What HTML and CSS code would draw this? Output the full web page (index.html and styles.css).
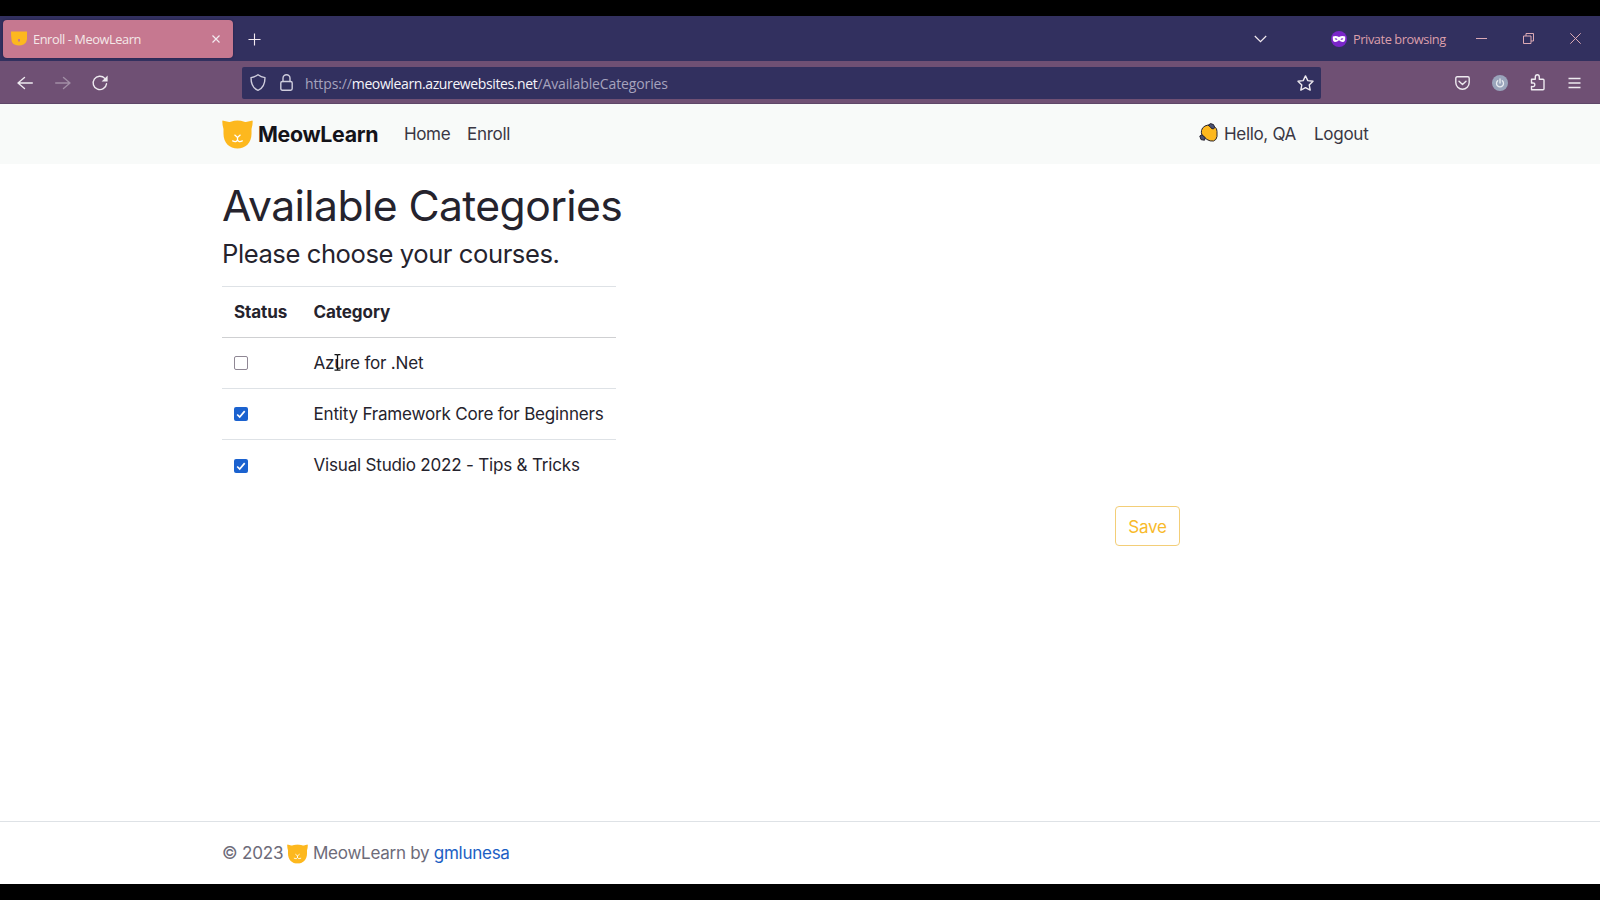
FILE: index.html
```html
<!DOCTYPE html>
<html lang="en">
<head>
<meta charset="utf-8">
<title>Enroll - MeowLearn</title>
<link rel="stylesheet" href="styles.css">
</head>
<body>
<svg class="defs" width="0" height="0">
  <symbol id="cat" viewBox="0 0 32 30">
    <path fill="#fdb81e" d="M.3 1.200C.3.6.8.5 1.300.7L5 1.500q2 .8 4 .2 7-2.200 14 0 2 .6 4-.2L30.700.7c.5-.2 1 0 1 .5q.1 4-1.200 8v5C30.500 24 24 29.500 16 29.500S1.500 24 1.500 14.200v-5Q.2 5 .3 1.200z"/>
    <path fill="none" stroke="#fff" stroke-width="1.300" stroke-linecap="round" stroke-linejoin="round" d="M13.200 15.600L16 18l2.800-2.400M16 18v2.600M11 21.600q3.800 2 5-1.200 1.200 3.200 5 1.200"/>
  </symbol>
</svg>
<div class="screen">
  <div class="tabs">
    <div class="tab">
      <svg class="favicon" viewBox="0 0 32 30"><path fill="#fdb81e" d="M0 1h32v15q-1 8-7 11-9 4-18 0-6-3-6-10Q0 9 0 1z"/><path fill="#c67890" d="M14 16h4v5h-4z"/></svg>
      <span class="tab-title">Enroll - MeowLearn</span>
      <svg class="tab-close" viewBox="0 0 8 8"><path d="M.5.500l7 7M7.500.500l-7 7"/></svg>
    </div>
    <svg class="plus" viewBox="0 0 14 14"><path d="M7 .5v13M.5 7h13"/></svg>
    <svg class="chev" viewBox="0 0 13 8"><path d="M.8 1l5.700 5.700L12.200 1"/></svg>
    <svg class="mask" viewBox="0 0 16 16"><circle cx="8" cy="8" r="8" fill="#7a26c9"/><path fill="#fff" fill-rule="evenodd" d="M1.800 5.500Q5 4.200 8 6q3-1.800 6.200-.5.500 5.500-2.500 5.500-2 0-3.700-1.800Q6.300 11 4.300 11 1.300 11 1.800 5.500zM3.600 7.700q1.500-1 2.900.6-1.500 1.300-2.900-.6zM12.400 7.700q-1.500-1-2.900.6 1.500 1.300 2.900-.6z"/></svg>
    <span class="private">Private browsing</span>
    <svg class="win min" viewBox="0 0 11 11"><path d="M0 5.500h11"/></svg>
    <svg class="win max" viewBox="0 0 11 11"><path d="M.5 3h7.500v7.500H.5zM3 3V.5h7.500V8H8"/></svg>
    <svg class="win cls" viewBox="0 0 11 11"><path d="M.3.300l10.400 10.400M10.700.300L.3 10.700"/></svg>
  </div>
  <div class="toolbar">
    <svg class="ic back" viewBox="0 0 16 16"><path d="M15.300 8H1M7.500 2.500L1 8l6.500 5.500"/></svg>
    <svg class="ic fwd" viewBox="0 0 16 16"><path d="M.7 8H15M8.500 2.500L15 8l-6.500 5.500"/></svg>
    <svg class="ic reload" viewBox="0 0 16 16"><path d="M14.500 8.800A6.700 6.700 0 1 1 12.800 3.400"/><path class="solid" d="M15.600.5v6H9.600z"/></svg>
    <div class="urlbar">
      <svg class="ic shield" viewBox="0 0 16 17"><path d="M8 .8Q11 3 15 3.600C15 10 13 14.500 8 16.300 3 14.500 1 10 1 3.600 5 3 8 .8 8 .8z"/></svg>
      <svg class="ic lock" viewBox="0 0 13 17"><rect x=".8" y="7.500" width="11.400" height="8.700" rx="1.600"/><path d="M3 7.500V4.200a3.500 3.500 0 0 1 7 0v3.300"/></svg>
      <span class="url">https://<b>meowlearn.azurewebsites.net</b>/AvailableCategories</span>
      <svg class="ic star" viewBox="0 0 17 16"><path d="M8.500.9l2.300 4.700 5.200.7-3.800 3.600 1 5.200-4.700-2.500-4.700 2.500 1-5.200L1 6.300l5.200-.7z"/></svg>
    </div>
    <svg class="ic pocket" viewBox="0 0 15 14"><path d="M2.200.8h10.600q1.400 0 1.400 1.400V6.500a6.700 6.700 0 0 1-13.400 0V2.200Q.8.8 2.200.8zM4 5.200L7.500 8.500 11 5.200"/></svg>
    <svg class="power" viewBox="0 0 16 16"><circle cx="8" cy="8" r="8" fill="#9aa4bb"/><path fill="none" stroke="#e8ebf0" stroke-width="1.300" stroke-linecap="round" d="M8 4v4M5.700 5.700a3.500 3.500 0 1 0 4.600 0"/></svg>
    <svg class="ic puzzle" viewBox="0 0 15 17"><path d="M1.500 15.800v-3.300q3.300.6 3.300-1.700T1.500 9.100V5.300h3.800V3q0-2.200 2-2.200t2 2.200v2.300h3.700q1 0 1 1v8.500q0 1-1 1z"/></svg>
    <svg class="ic menu" viewBox="0 0 13 12"><path d="M.5 1.500h12M.5 6h12M.5 10.500h12"/></svg>
  </div>
  <nav class="nav">
    <svg class="logo" viewBox="0 0 32 30"><use href="#cat"/></svg>
    <span class="brand">MeowLearn</span>
    <span class="home">Home</span>
    <span class="enroll">Enroll</span>
    <svg class="wave" viewBox="0 0 19 19"><path d="M2.500 7.500Q3 4.500 6 3q3-1.600 5.500-.5L16 4.200q2 1.300 2 4.300v5q-.5 3.500-3.500 4.500-3.500.5-6.500-1.500L3 12q-1-2.200-.5-4.500z" fill="#fdb81e" stroke="#28242f" stroke-width="1"/><path d="M9.200 2.300L11.500.6l3 1 1.300 3-1.300 1.300-2-.4-1-1.500zM.8 13l2.200-1.200 3.300 3L5.500 17.200l-3.500-.6z" fill="#4a5274" stroke="#24212e" stroke-width="1"/></svg>
    <span class="hello">Hello, QA</span>
    <span class="logout">Logout</span>
  </nav>
  <main class="main">
    <h1>Available Categories</h1>
    <h2>Please choose your courses.</h2>
    <table>
      <thead><tr><th class="status">Status</th><th>Category</th></tr></thead>
      <tbody>
        <tr><td><span class="box"></span></td><td><span class="cursor-host">Azure for .Net<svg class="cursor" viewBox="0 0 7 17"><path d="M.5.700h2.300l.7.700.7-.7h2.300M3.500 1.400v14M.5 16.200h2.300l.7-.7.7.7h2.300"/></svg></span></td></tr>
        <tr><td><span class="box on"><svg viewBox="0 0 14 14"><path d="M3.200 7.500l2.500 2.600 5-6"/></svg></span></td><td>Entity Framework Core for Beginners</td></tr>
        <tr><td><span class="box on"><svg viewBox="0 0 14 14"><path d="M3.200 7.500l2.500 2.600 5-6"/></svg></span></td><td>Visual Studio 2022 - Tips &amp; Tricks</td></tr>
      </tbody>
    </table>
    <div class="actions"><button class="save">Save</button></div>
  </main>
  <footer class="footer">
    <span class="copy">© 2023</span>
    <svg class="foot-cat" viewBox="0 0 32 30"><use href="#cat"/></svg>
    <span class="by">MeowLearn by <a>gmlunesa</a></span>
  </footer>
</div>
</body>
</html>
```

FILE: styles.css
```css
* { box-sizing: border-box; }
body { margin: 0; background: #000; font-family: Inter, sans-serif; font-size: 17.07px; letter-spacing: -.21px; color: #25232d; }
svg { display: block; flex: none; overflow: visible; }
.defs { position: absolute; }
.screen { height: 900px; padding: 16px 0; display: flex; flex-direction: column; overflow: hidden; }
.screen > * { flex: none; }
span { white-space: nowrap; }

.tabs { height: 45px; background: #32305f; display: flex; align-items: center; font-family: "Open Sans", "Noto Sans", sans-serif; font-size: 12.8px; letter-spacing: -.42px; }
.tab { width: 230px; height: 38px; margin: 0 0 0 2.5px; padding-left: 8.5px; border-radius: 4px; background: #c67890; box-shadow: 0 0 2px #201c43; display: flex; align-items: center; }
.favicon { width: 16px; height: 15px; }
.tab-title { width: 177px; margin: 1px 0 0 6px; color: #f4e8e8; }
.tab-close { width: 8px; height: 8px; margin-left: 2px; }
.tab-close path, .plus path, .chev path { fill: none; stroke: #f3eaf0; stroke-width: 1.2; }
.plus { width: 13px; height: 13px; margin: 1px 0 0 15.5px; }
.chev { width: 13px; height: 8px; margin-left: 993px; }
.mask { width: 16px; height: 16px; margin-left: 64px; margin-top: 1px; }
.private { width: 92px; margin-left: 6px; color: #dc9fab; }
.win { width: 11px; height: 11px; }
.win path { fill: none; stroke: #dcaab5; stroke-width: 1; }
.min { margin-left: 31px; }
.max { margin-left: 36px; }
.cls { margin-left: 36px; }

.toolbar { height: 43px; padding-top: 1px; background: #6f5074; border-bottom: 1px solid #5e4668; display: flex; align-items: center; }
.ic { fill: none; stroke: #eeeaf0; stroke-width: 1.4; stroke-linejoin: round; stroke-linecap: round; }
.ic .solid { fill: #eeeaf0; stroke: none; }
.back { width: 16px; height: 16px; margin-left: 17px; }
.fwd { width: 16px; height: 16px; margin-left: 22px; opacity: .4; }
.reload { width: 16px; height: 16px; margin-left: 21px; }
.urlbar { width: 1079px; height: 32px; margin-left: 134px; padding-left: 8px; background: #32305f; border-radius: 2px; display: flex; align-items: center; }
.urlbar .ic { stroke: #cfcddd; }
.shield { width: 16px; height: 17px; }
.lock { width: 13px; height: 17px; margin-left: 14px; }
.url { width: 363px; margin: 1px 0 0 12px; font: 14px "Open Sans", "Noto Sans", sans-serif; letter-spacing: -.12px; color: #a6a3bd; }
.url b { font-weight: 400; letter-spacing: -.38px; color: #f6f5fa; }
.urlbar .star { width: 17px; height: 16px; margin-left: 629px; stroke: #eeeaf0; }
.pocket { width: 15px; height: 14px; margin-left: 134px; }
.power { width: 16px; height: 16px; margin-left: 22px; }
.puzzle { width: 15px; height: 17px; margin-left: 22px; }
.menu { width: 13px; height: 12px; margin-left: 23px; stroke-linecap: butt; }

.nav { height: 60px; padding: 0 230px 1px 222px; background: #f8faf9; display: flex; align-items: center; color: #3a3744; }
.logo { width: 31px; height: 29px; margin-top: 1px; }
.brand { width: 120px; margin-left: 5px; font-size: 21.33px; font-weight: 700; letter-spacing: -.3px; color: #141319; }
.home { margin-left: 26px; width: 46px; letter-spacing: -.4px; }
.enroll { margin-left: 17px; letter-spacing: -.3px; }
.wave { width: 19px; height: 19px; margin: -2px 0 0 auto; }
.hello { width: 73px; margin: -1px 0 0 6px; letter-spacing: -.35px; }
.logout { width: 56px; margin-left: 17px; letter-spacing: -.3px; }

.main { height: 657px; padding: 16px 230px 0 222px; background: #fff; }
h1 { margin: 0; font-size: 42.67px; line-height: 51px; font-weight: 400; letter-spacing: -.58px; }
h2 { margin: 7px 0 0; font-size: 25.6px; line-height: 31px; font-weight: 400; letter-spacing: -.43px; }
table { width: 394px; margin-top: 17px; border-collapse: separate; border-spacing: 0; table-layout: fixed; border-top: 1px solid #dee2e6; }
th, td { height: 51px; padding: 0 0 2px 12px; text-align: left; vertical-align: middle; line-height: 25px; white-space: nowrap; }
th { font-weight: 700; letter-spacing: -.1px; border-bottom: 1px solid #cfd0d2; }
tr:not(:last-child) td { border-bottom: 1px solid #dee2e6; }
.status { width: 79.5px; }
.box { display: block; position: relative; top: 1px; width: 14px; height: 14px; border: 1.5px solid #8f8794; border-radius: 2px; background: #fff; }
.box.on { border: 0; background: #1b62cf; }
.box path { fill: none; stroke: #fff; stroke-width: 1.7; }
.cursor-host { position: relative; }
.cursor { position: absolute; left: 20px; top: 2px; width: 7px; height: 17px; }
.cursor path { fill: none; stroke: #111; stroke-width: 1.3; }
.actions { display: flex; justify-content: flex-end; padding: 15px 190px 0 0; }
.save { width: 65px; height: 40px; padding: 0; border: 1px solid #f3ce78; border-radius: 4px; background: #fff; color: #f8ba2b; font: 17.07px Inter, sans-serif; letter-spacing: -.3px; }

.footer { height: 63px; padding: 0 0 1px 222px; background: #fff; border-top: 1px solid #dee2e6; display: flex; align-items: center; color: #6d6b79; }
.copy { width: 61px; }
.foot-cat { width: 21px; height: 20px; margin: 2px 0 0 4px; }
.by { margin-left: 5px; letter-spacing: -.3px; }
.by a { color: #1c60c4; }
```
